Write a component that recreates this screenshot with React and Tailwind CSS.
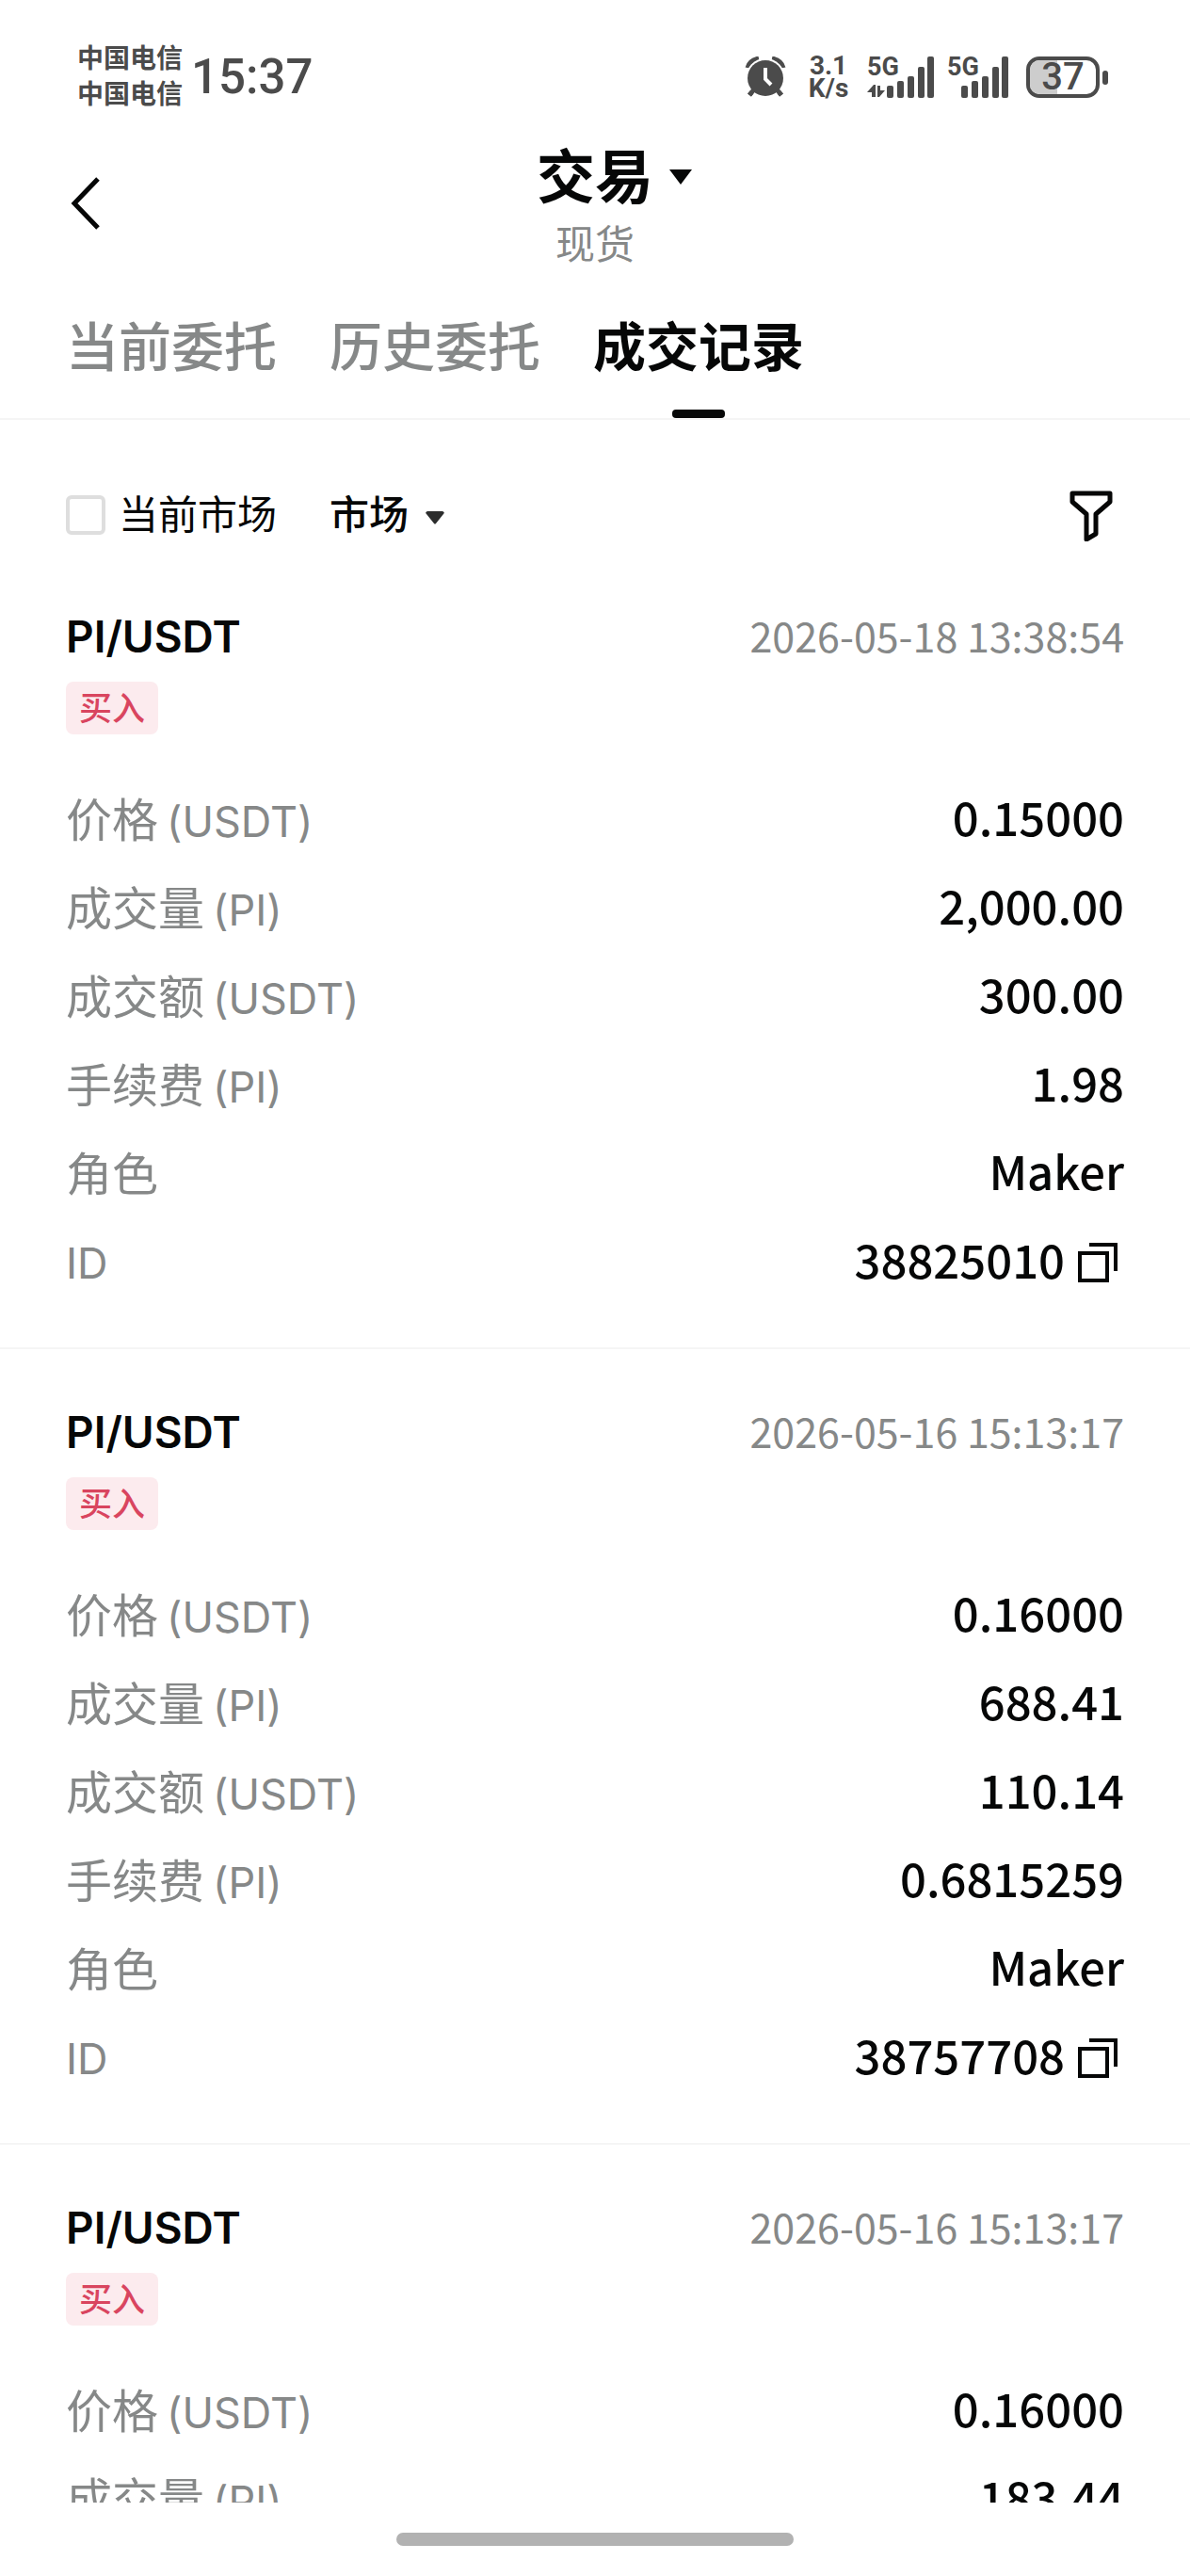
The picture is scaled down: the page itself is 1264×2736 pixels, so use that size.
import { useState } from "react";

const records = [
  {
    pair: "PI/USDT",
    side: "买入",
    time: "2026-05-18 13:38:54",
    id: "38825010",
    rows: [
      { label: "价格", unit: "(USDT)", value: "0.15000" },
      { label: "成交量", unit: "(PI)", value: "2,000.00" },
      { label: "成交额", unit: "(USDT)", value: "300.00" },
      { label: "手续费", unit: "(PI)", value: "1.98" },
      { label: "角色", value: "Maker" },
    ],
  },
  {
    pair: "PI/USDT",
    side: "买入",
    time: "2026-05-16 15:13:17",
    id: "38757708",
    rows: [
      { label: "价格", unit: "(USDT)", value: "0.16000" },
      { label: "成交量", unit: "(PI)", value: "688.41" },
      { label: "成交额", unit: "(USDT)", value: "110.14" },
      { label: "手续费", unit: "(PI)", value: "0.6815259" },
      { label: "角色", value: "Maker" },
    ],
  },
  {
    pair: "PI/USDT",
    side: "买入",
    time: "2026-05-16 15:13:17",
    rows: [
      { label: "价格", unit: "(USDT)", value: "0.16000" },
      { label: "成交量", unit: "(PI)", value: "183.44" },
    ],
  },
];

const tabs = ["当前委托", "历史委托", "成交记录"];

function AlarmIcon() {
  return (
    <svg width="44" height="44" viewBox="0 0 44 44" fill="none">
      <path d="M3 12 Q5 4 15 2" stroke="#4b4b4b" strokeWidth="5" />
      <path d="M41 12 Q39 4 29 2" stroke="#4b4b4b" strokeWidth="5" />
      <path d="M10 35 L5 41 M34 35 L39 41" stroke="#4b4b4b" strokeWidth="5" />
      <circle cx="22" cy="23" r="21" fill="#fff" />
      <path d="M10 35 L5 41 M34 35 L39 41" stroke="#4b4b4b" strokeWidth="5" />
      <circle cx="22" cy="23" r="19" fill="#4b4b4b" />
      <path d="M22 12 V24 L28 30" stroke="#fff" strokeWidth="4" />
    </svg>
  );
}

function Signal({ arrows }) {
  return (
    <div className="relative w-[72px] h-[44px]">
      <span className="absolute left-0 top-0 text-[27px] leading-[22px] font-bold">5G</span>
      <svg className="absolute inset-0" width="72" height="44" viewBox="0 0 72 44" fill="currentColor">
        {arrows && <path d="M0 38 L7 30 H9 V43 H5 V38 Z M11 31 H14 V36 H19 L13 43 H11 Z" />}
        <g transform={arrows ? "translate(21 0)" : "translate(15 0)"}>
          <rect x="0" y="31" width="7" height="13" rx="2" />
          <rect x="11" y="26" width="7" height="18" rx="2" />
          <rect x="22" y="21" width="7" height="23" rx="2" />
          <rect x="33" y="11" width="7" height="33" rx="2" />
          <rect x="43" y="0" width="7" height="44" rx="2" />
        </g>
      </svg>
    </div>
  );
}

function Battery({ level }) {
  return (
    <div className="flex items-center gap-[3px]">
      <div className="relative w-[78px] h-[44px] rounded-[14px] border-4 border-[#4b4b4b] flex items-center justify-center">
        <div className="absolute left-0 inset-y-0 rounded-l-[10px] bg-[#cdcdcd]" style={{ width: `${level + 5}%` }} />
        <span className="relative text-[40px] leading-[36px] font-medium">{level}</span>
      </div>
      <div className="w-[6px] h-[15px] rounded-[3px] bg-[#4b4b4b]" />
    </div>
  );
}

function StatusBar() {
  return (
    <div className="h-[152px] pt-[12px] pl-[82px] pr-[87px] flex items-center justify-between text-[#4b4b4b] font-['Roboto','Noto_Sans_CJK_SC',sans-serif]">
      <div className="flex items-center gap-[9px]">
        <div className="text-[28px] leading-[38px] font-bold">
          <p>中国电信</p>
          <p>中国电信</p>
        </div>
        <p className="text-[51px] leading-[56px] font-medium">15:37</p>
      </div>
      <div className="flex items-center">
        <AlarmIcon />
        <div className="ml-[21px] w-[48px] text-[28px] leading-[24px] font-bold text-center">
          <p>3.1</p>
          <p>K/s</p>
        </div>
        <div className="ml-[17px] flex gap-[13px]">
          <Signal arrows />
          <Signal />
        </div>
        <div className="ml-[12px]">
          <Battery level={37} />
        </div>
      </div>
    </div>
  );
}

function CopyIcon() {
  return (
    <svg width="44" height="44" viewBox="0 0 44 44" fill="none" stroke="#060707" strokeWidth="4">
      <rect x="2" y="12" width="29" height="29" />
      <path d="M12 3 H40 V31" />
    </svg>
  );
}

function Record({ record }) {
  return (
    <article className="shrink-0 pt-[60px] pb-[42px] px-[70px] border-b-2 border-[#f5f5f5]">
      <div className="h-[56px] flex items-center justify-between leading-[56px]">
        <h2 className="text-[46px] font-semibold">{record.pair}</h2>
        <time className="pb-[4px] text-[43px] text-[#868888] font-['Noto_Sans_CJK_SC',sans-serif]">{record.time}</time>
      </div>
      <span className="mt-[20px] mb-[45px] block w-fit h-[56px] px-[14px] rounded-[8px] bg-[#fcebee] text-[#d9455f] text-[35px] leading-[56px] font-medium">
        {record.side}
      </span>
      <dl>
        {record.rows.map((row) => (
          <div key={row.label} className="h-[94px] flex items-center justify-between">
            <dt className="text-[49px] text-[#868888]">
              {row.label}
              {row.unit && <span className="ml-[9px] text-[45px]">{row.unit}</span>}
            </dt>
            <dd className="pb-[10px] text-[49px] leading-[56px] font-medium font-['Noto_Sans_CJK_SC',sans-serif]">{row.value}</dd>
          </div>
        ))}
        {record.id && (
          <div className="h-[94px] flex items-center justify-between">
            <dt className="text-[45px] text-[#868888]">ID</dt>
            <dd className="pb-[10px] flex items-center gap-[14px] text-[49px] leading-[56px] font-medium font-['Noto_Sans_CJK_SC',sans-serif]">
              {record.id}
              <button type="button" aria-label="复制" className="w-[49px] pt-[8px]">
                <CopyIcon />
              </button>
            </dd>
          </div>
        )}
      </dl>
    </article>
  );
}

export default function App() {
  const [active, setActive] = useState(2);
  const [onlyCurrent, setOnlyCurrent] = useState(false);

  return (
    <div className="h-screen flex flex-col bg-white text-[#060707] font-['Inter','Noto_Sans_CJK_SC',sans-serif] overflow-hidden">
      <StatusBar />

      {/* Title */}
      <header className="px-[70px] grid grid-cols-[1fr_auto_1fr] items-center">
        <button type="button" aria-label="返回" className="w-[44px] mb-[8px]">
          <svg width="44" height="56" viewBox="0 0 44 56" fill="none" stroke="#060707" strokeWidth="5">
            <path d="M34 2 L9 28 L34 54" />
          </svg>
        </button>
        <div className="text-center">
          <button type="button" className="relative block text-[62px] leading-[74px] font-bold">
            交易
            <svg className="absolute left-full top-[28px] ml-[17px]" width="24" height="16" viewBox="0 0 24 16">
              <path d="M0 0 H24 L12 16 Z" fill="#060707" />
            </svg>
          </button>
          <p className="mt-[6px] text-[42px] leading-[56px] text-[#868888]">现货</p>
        </div>
      </header>

      {/* Tabs */}
      <nav className="mt-[41px] px-[70px] flex gap-[56px] border-b-2 border-[#f5f5f5]">
        {tabs.map((tab, i) => (
          <button
            key={tab}
            type="button"
            onClick={() => setActive(i)}
            className={`flex flex-col items-center text-[56px] leading-[80px] ${i === active ? "font-bold" : "font-medium text-[#868888]"}`}
          >
            {tab}
            <span className={`mt-[26px] w-[56px] h-[9px] rounded-[4px] ${i === active ? "bg-[#060707]" : ""}`} />
          </button>
        ))}
      </nav>

      {/* Filters */}
      <div className="pt-[73px] pb-[13px] px-[70px] flex items-center text-[42px] leading-[56px]">
        <label className="flex items-center gap-[14px]">
          <input
            type="checkbox"
            checked={onlyCurrent}
            onChange={(e) => setOnlyCurrent(e.target.checked)}
            className="appearance-none w-[42px] h-[42px] rounded-[6px] border-4 border-[#dedede] checked:bg-[#060707]"
          />
          当前市场
        </label>
        <div className="relative ml-[56px]">
          <select aria-label="市场" className="appearance-none block pr-[37px] font-medium bg-transparent">
            <option>市场</option>
          </select>
          <svg className="absolute right-0 top-[24px] pointer-events-none" width="20" height="14" viewBox="0 0 20 14">
            <path d="M2 0 H18 Q21 1 19 3 L11 13 Q10 14 9 13 L1 3 Q-1 1 2 0 Z" fill="#2c2d2d" />
          </svg>
        </div>
        <button type="button" aria-label="筛选" className="ml-auto mr-[11px]">
          <svg width="48" height="56" viewBox="0 0 48 56" fill="none" stroke="#060707" strokeWidth="5" strokeLinejoin="round">
            <path d="M4 5 H44 V14 L29 27 V48 L19 54 V27 L4 14 Z" />
          </svg>
        </button>
      </div>

      {/* Records */}
      <main className="flex-1 min-h-0 flex flex-col overflow-hidden">
        {records.map((r, i) => <Record key={i} record={r} />)}
      </main>

      <footer className="py-[32px] flex justify-center">
        <div className="w-1/3 h-[14px] rounded-[7px] bg-[#b2b2b2]" />
      </footer>
    </div>
  );
}
